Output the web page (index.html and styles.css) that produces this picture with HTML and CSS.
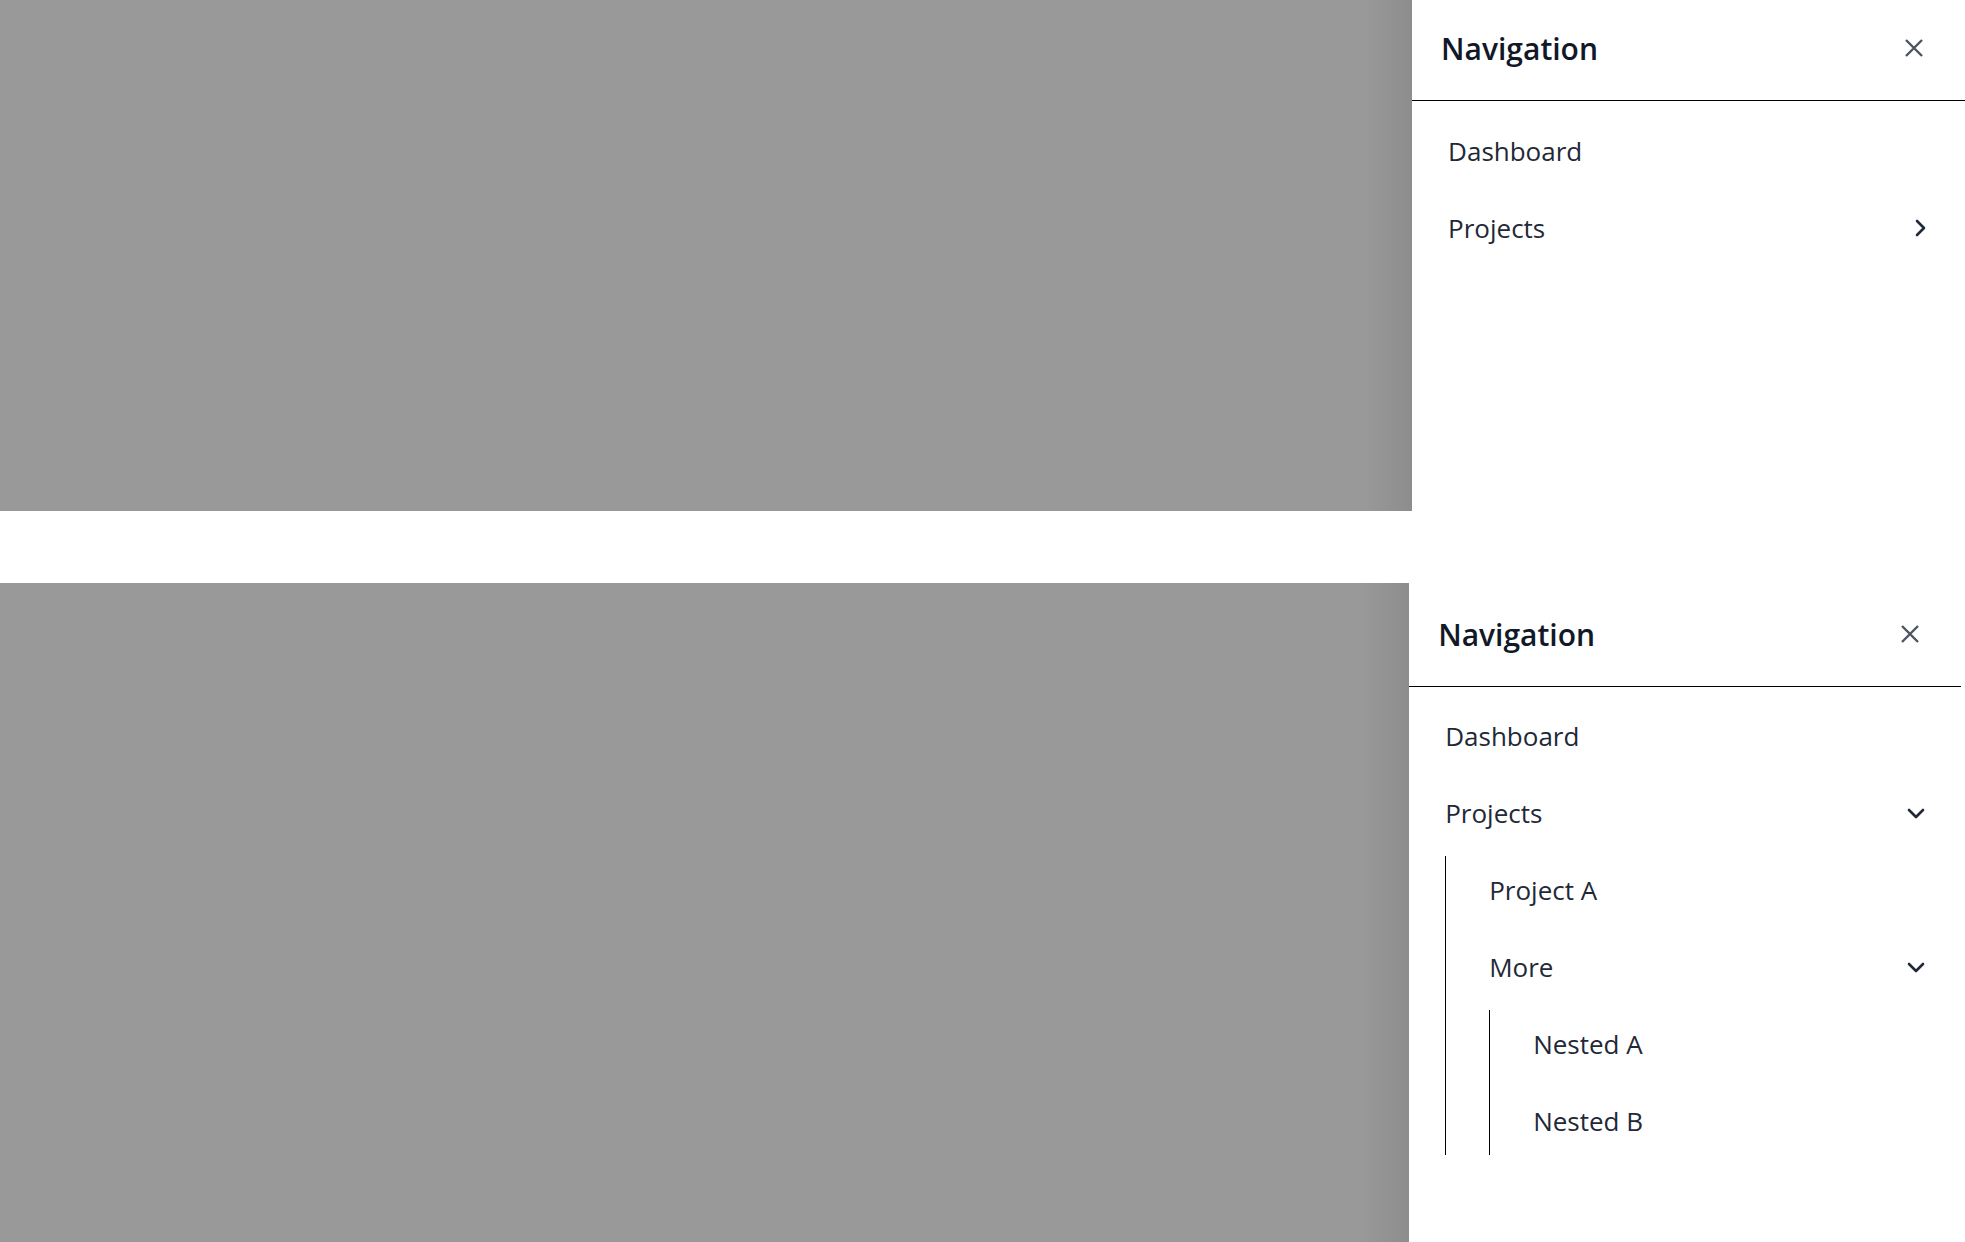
FILE: index.html
```html
<!DOCTYPE html>
<html lang="en">
<head>
<meta charset="utf-8">
<title>Navigation drawer</title>
<link rel="stylesheet" href="styles.css">
</head>
<body>
  <section class="frame frame-top">
    <div class="overlay"></div>
    <aside class="drawer">
      <header class="drawer-header">
        <h2 class="drawer-title">Navigation</h2>
        <button class="close-btn" aria-label="Close">
          <svg width="20" height="20" viewBox="0 0 20 20" fill="none" stroke="currentColor" stroke-width="2.4" stroke-linecap="butt"><path d="M2 2L18 18M18 2L2 18"/></svg>
        </button>
      </header>
      <nav class="nav">
        <ul class="list">
          <li class="item"><span>Dashboard</span></li>
          <li class="item"><span>Projects</span>
            <svg class="chev" width="24" height="24" viewBox="0 0 24 24" fill="none" stroke="currentColor" stroke-width="2.6" stroke-linecap="round" stroke-linejoin="round"><path d="M9 5l7 7-7 7"/></svg>
          </li>
        </ul>
      </nav>
    </aside>
  </section>

  <section class="frame frame-bottom">
    <div class="overlay"></div>
    <aside class="drawer">
      <header class="drawer-header">
        <h2 class="drawer-title">Navigation</h2>
        <button class="close-btn" aria-label="Close">
          <svg width="20" height="20" viewBox="0 0 20 20" fill="none" stroke="currentColor" stroke-width="2.4" stroke-linecap="butt"><path d="M2 2L18 18M18 2L2 18"/></svg>
        </button>
      </header>
      <nav class="nav">
        <ul class="list">
          <li class="item"><span>Dashboard</span></li>
          <li class="item"><span>Projects</span>
            <svg class="chev" width="24" height="24" viewBox="0 0 24 24" fill="none" stroke="currentColor" stroke-width="2.6" stroke-linecap="round" stroke-linejoin="round"><path d="M5 9l7 7 7-7"/></svg>
          </li>
          <li>
            <ul class="list sub">
              <li class="item"><span>Project A</span></li>
              <li class="item"><span>More</span>
                <svg class="chev" width="24" height="24" viewBox="0 0 24 24" fill="none" stroke="currentColor" stroke-width="2.6" stroke-linecap="round" stroke-linejoin="round"><path d="M5 9l7 7 7-7"/></svg>
              </li>
              <li>
                <ul class="list sub">
                  <li class="item"><span>Nested A</span></li>
                  <li class="item"><span>Nested B</span></li>
                </ul>
              </li>
            </ul>
          </li>
        </ul>
      </nav>
    </aside>
  </section>
</body>
</html>
```

FILE: styles.css
```css
* { box-sizing: border-box; }

html, body {
  margin: 0;
  padding: 0;
  background: #ffffff;
}

body {
  font-family: "Open Sans", "Noto Sans", "Liberation Sans", sans-serif;
  color: #1f2937;
  overflow: hidden;
}

.frame {
  display: flex;
  width: 100%;
}

.frame-top {
  height: 511px;
}

.frame-bottom {
  width: calc(100% - 4px);
  height: 700px;
  margin-top: 72px;
}

.overlay {
  flex: 1;
  background: linear-gradient(to right, #999999 calc(100% - 48px), #8d8d8d 100%);
}

.drawer {
  width: 28.14%;
  background: #ffffff;
}

.drawer-header {
  height: 101px;
  border-bottom: 1px solid #000000;
  display: flex;
  align-items: center;
  justify-content: space-between;
  padding: 0 41px 4px 29px;
}

.frame-bottom .drawer-header {
  height: 104px;
  padding-top: 3px;
}

.drawer-title {
  margin: 0;
  font-size: 30px;
  font-weight: 600;
  color: #111827;
  letter-spacing: 0;
}

.close-btn {
  border: 0;
  background: none;
  padding: 0;
  margin: 0;
  color: #4b5563;
  display: flex;
  cursor: pointer;
}

.nav {
  padding-top: 16px;
}

.frame-bottom .nav {
  padding-top: 15px;
}

.list {
  list-style: none;
  margin: 0;
  padding: 0;
  display: flex;
  flex-direction: column;
  gap: 9px;
}

.item {
  height: 68px;
  display: flex;
  align-items: center;
  justify-content: space-between;
  padding: 0 33px 0 36px;
  font-size: 26px;
  color: #1f2937;
}

.sub {
  margin-left: 36px;
  border-left: 1px solid #000000;
  padding-left: 7px;
}

.chev {
  color: #1f2937;
  flex: none;
}
```
